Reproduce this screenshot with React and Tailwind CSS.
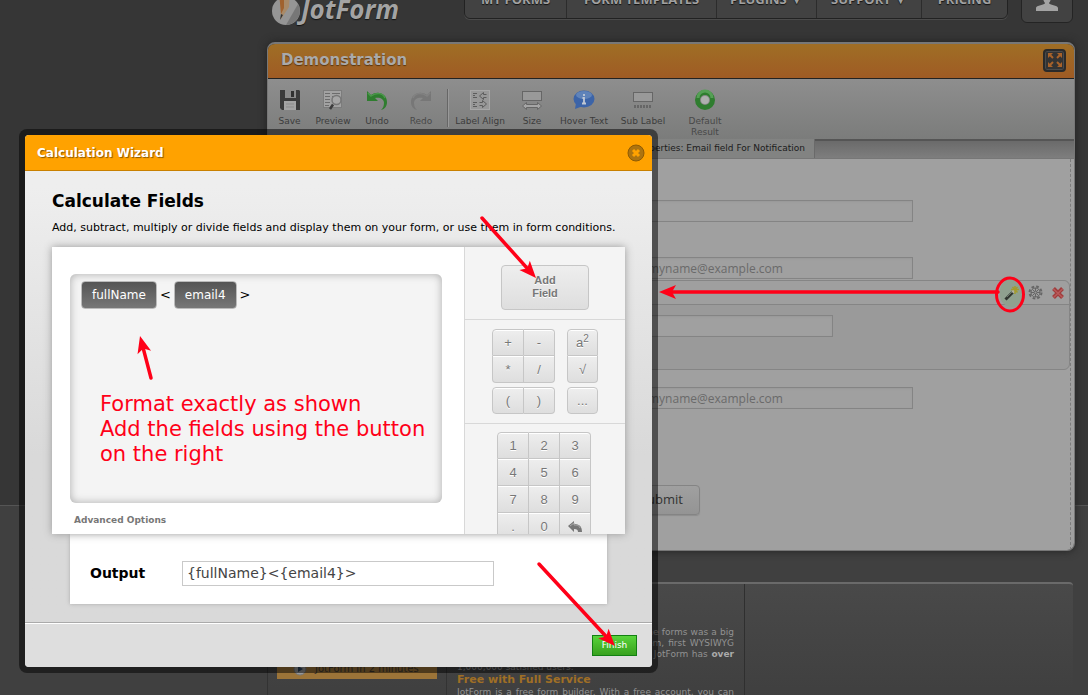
import { clsx } from 'clsx';

const NAV = [
  { label: 'MY FORMS', width: 'w-[102px]' },
  { label: 'FORM TEMPLATES', width: 'w-[150px]' },
  { label: 'PLUGINS ▼', width: 'w-[100px]' },
  { label: 'SUPPORT ▼', width: 'w-[105px]' },
  { label: 'PRICING', width: 'w-[85px]' },
];

const DIGITS = ['1', '2', '3', '4', '5', '6', '7', '8', '9', '.', '0'];

function SaveIcon() {
  return (
    <svg width="22" height="22" viewBox="0 0 22 22">
      <path d="M1 1h19l1 1v19H3l-2-2z" fill="#3b3b3b" />
      <rect x="6" y="1" width="11" height="8" fill="#8b8b8b" />
      <rect x="12" y="2" width="3" height="6" fill="#303030" />
      <rect x="5" y="12" width="12" height="9" fill="#a4a4a4" />
      <path d="M7 15h8M7 18h8" stroke="#8b8b8b" />
    </svg>
  );
}

function PreviewIcon() {
  return (
    <svg width="22" height="22" viewBox="0 0 22 22" fill="none">
      <rect x="1.500" y="1.500" width="18" height="17" fill="#a2a2a2" stroke="#7c7c7c" />
      <path d="M3 4.500h5M10 4.500h8M3 7.500h5M10 7.500h8M3 10.500h5M3 13.500h5M3 16.500h4" stroke="#6c6c6c" />
      <circle cx="14.500" cy="11" r="4.500" fill="#a6a6a6" stroke="#777" strokeWidth="1.500" />
      <path d="M11 15.500l-3 4.500" stroke="#3c3c3c" strokeWidth="2.500" />
    </svg>
  );
}

function TurnIcon({ color, shade, flip }) {
  return (
    <svg width="22" height="22" viewBox="0 0 22 22" className={clsx(flip && '-scale-x-100')}>
      <path d="M1 2v10h11L9 9c5-1 9 1 9 5 0 3-1 5-3 7 4-1 6-4 6-8 0-8-9-12-16-7z" fill={color} />
      <path d="M2 4l3 3c6-4 12-3 14 2" fill="none" stroke={shade} strokeWidth="1.500" />
    </svg>
  );
}

function LabelAlignIcon() {
  return (
    <svg width="22" height="22" viewBox="0 0 22 22" fill="none" stroke="#5c5c5c">
      <rect x="1.500" y="1.500" width="19" height="19" fill="#989898" stroke="#a8a8a8" />
      <path d="M4 4.500h4M4 6.500h2M4 8.500h4M4 13.500h4M4 15.500h2M4 17.500h4" />
      <path d="M17.500 5.500h-3v-2l-4 3.500 4 3.500v-2h3M10.500 13.500h3v-2l4 3.500-4 3.500v-2h-3" />
    </svg>
  );
}

function SizeIcon() {
  return (
    <svg width="22" height="22" viewBox="0 0 22 22" fill="none" stroke="#666">
      <rect x="1.500" y="2.500" width="19" height="9" fill="#999" />
      <path d="M1.500 17l4-3.500v2h11v-2l4 3.500-4 3.500v-2h-11v2z" fill="#a5a5a5" />
    </svg>
  );
}

function HoverIcon() {
  return (
    <svg width="24" height="22" viewBox="0 0 24 22">
      <ellipse cx="12" cy="10" rx="10.500" ry="8.500" fill="#3c64a8" />
      <path d="M4 14l-1 6 8-3z" fill="#3c64a8" />
      <ellipse cx="12" cy="6" rx="8" ry="4" fill="#5f83b9" />
      <path d="M12 5v2M10.500 9H12v5M10 14.500h4" stroke="#c0c8d4" strokeWidth="1.800" fill="none" />
    </svg>
  );
}

function ResultIcon() {
  return (
    <svg width="22" height="22" viewBox="0 0 22 22" fill="none">
      <circle cx="11" cy="11" r="7.500" stroke="#2f7d2f" strokeWidth="5" />
      <path d="M4 9a7 7 0 0 1 14 0" stroke="#55a055" strokeWidth="3" />
      <circle cx="11" cy="11" r="4" fill="#aeb0ae" />
    </svg>
  );
}

function ToolButton({ label, width, dim, children }) {
  return (
    <button className={clsx('flex shrink-0 flex-col items-center text-[9px] leading-[11px]', width, dim ? 'text-[#484848]' : 'text-[#3c3c3c]')}>
      <span className="mb-[5px] flex h-[22px] items-center">{children}</span>
      {label}
    </button>
  );
}

function Header() {
  return (
    <header className="flex h-[42px] items-start">
      <a href="#home" aria-label="JotForm" className="-mt-2 flex w-[197px] items-center pl-1 text-[#a3a3a3]">
        <svg width="30" height="34" viewBox="0 0 30 34">
          <circle cx="15" cy="19" r="14" fill="#959595" />
          <path d="M15 33a14 14 0 0 0 12-21z" fill="#777" />
          <path d="M9 0h10l-1 15-8 12z" fill="#a88a68" />
          <path d="M8 0h5v16l-3 6z" fill="#a0622e" />
          <path d="M10 22l2 1-3 5z" fill="#333" />
        </svg>
        <span className="font-['Open_Sans'] text-[26px] leading-8 font-bold italic [text-shadow:0_1px_1px_#111]">JotForm</span>
      </a>
      <nav className="-mt-5 flex h-[39px] divide-x divide-[#2c2c2c] rounded-b-md border border-[#222] bg-[#424242] shadow-[0_1px_0_#4b4b4b]">
        {NAV.map((item) => (
          <a
            key={item.label}
            href="#nav"
            className={clsx("flex items-center justify-center pt-px font-['Open_Sans'] text-[13px] font-bold whitespace-nowrap text-[#a0a0a0] [text-shadow:0_1px_1px_#111]", item.width)}
          >
            {item.label}
          </a>
        ))}
      </nav>
      <button aria-label="Account" className="mr-0.5 -mt-5 ml-auto flex h-[43px] w-[52px] items-end justify-center rounded-b-md border border-[#242424] bg-[#424242] pb-[11px]">
        <svg width="24" height="20" viewBox="0 0 24 20" fill="#a3a3a3">
          <path d="M8 6a4 5 0 0 1 8 0c0 3-1 5-2 6 0 2 9 2 9 5v3H1v-3c0-3 9-3 9-5-1-1-2-3-2-6z" />
        </svg>
      </button>
    </header>
  );
}

function Toolbar() {
  return (
    <div className="flex h-[60px] items-start bg-gradient-to-b from-[#8e8e8e] to-[#7b7c7b] pt-[10px]">
      <ToolButton label="Save" width="w-[43px]"><SaveIcon /></ToolButton>
      <ToolButton label="Preview" width="w-11"><PreviewIcon /></ToolButton>
      <ToolButton label="Undo" width="w-11"><TurnIcon color="#2f7d2f" shade="#4c984c" /></ToolButton>
      <ToolButton label="Redo" width="w-11" dim><TurnIcon color="#777" shade="#828282" flip /></ToolButton>
      <span className="ml-1 h-[38px] w-0.5 border-l border-[#666] bg-[#999]" />
      <ToolButton label="Label Align" width="w-[62px]"><LabelAlignIcon /></ToolButton>
      <ToolButton label="Size" width="w-[42px]"><SizeIcon /></ToolButton>
      <ToolButton label="Hover Text" width="w-[62px]"><HoverIcon /></ToolButton>
      <ToolButton label="Sub Label" width="w-14">
        <svg width="22" height="22" viewBox="0 0 22 22">
          <rect x="1.500" y="3.500" width="19" height="9" fill="#999" stroke="#666" />
          <path d="M2 17.500h18" stroke="#666" strokeWidth="3" strokeDasharray="2 1" />
        </svg>
      </ToolButton>
      <ToolButton label={<>Default<br />Result</>} width="w-[68px]" dim><ResultIcon /></ToolButton>
    </div>
  );
}

const field = "block h-[22px] w-[270px] border border-[#848484] bg-[#a0a0a0] px-1 font-['Open_Sans'] text-[12px] text-[#666] placeholder:text-[#6a6a6a] shadow-[inset_0_1px_2px_#999]";

function FormArea() {
  return (
    <div className="relative h-[391px] bg-[#a0a0a0] pt-[41px] pr-1">
      <div className="absolute inset-y-0 right-[3px] border-r border-dashed border-[#7c7c7c]" />
      <div className="pl-[375px]">
        <input aria-label="Full Name" className={field} />
        <input aria-label="E-mail" placeholder="myname@example.com" className={clsx(field, 'mt-[35px]')} />
      </div>
      <div className="mt-px h-[90px] rounded-md border border-[#858585] bg-[#9a9a9a]">
        <div className="flex h-6 items-center justify-end rounded-t-md border-b border-[#858585] bg-[#9f9f9f] pr-1">
          <button aria-label="Calculation wizard" className="mr-1 flex h-7 w-6 items-center justify-center rounded-full bg-[#8fa08f]">
            <svg width="16" height="16" viewBox="0 0 16 16">
              <path d="M1.500 14.500L9 7" stroke="#303630" strokeWidth="3" />
              <path d="M3 12l6-6" stroke="#6b756b" />
              <path d="M8.500 7.500l2-2" stroke="#b0b0a0" strokeWidth="3" />
              <path d="M11 1v8M7 4.500h8M8.500 2l5 5.500M13.500 2L10 5.500" stroke="#a39b2c" strokeWidth="1.500" />
            </svg>
          </button>
          <button aria-label="Settings" className="mr-2">
            <svg width="15" height="15" viewBox="0 0 15 15" fill="none" stroke="#666">
              <circle cx="7.500" cy="7.500" r="6" strokeWidth="2" strokeDasharray="2.700 2" />
              <circle cx="7.500" cy="7.500" r="4.500" />
              <path d="M7.500 3v9M3 7.500h9M4.500 4.500l6 6M10.500 4.500l-6 6" />
              <circle cx="7.500" cy="7.500" r="1.500" fill="#999" />
            </svg>
          </button>
          <button aria-label="Delete">
            <svg width="14" height="14" viewBox="0 0 14 14">
              <path d="M2.500 2.500l9 9M11.500 2.500l-9 9" stroke="#a03c3c" strokeWidth="4" />
              <path d="M2.500 3l9 8.500M11.500 3l-9 8.500" stroke="#b85a5a" strokeWidth="1.500" />
            </svg>
          </button>
        </div>
        <div className="pt-[10px] pl-[294px]">
          <input aria-label="Email field For Notification" className={field} />
        </div>
      </div>
      <div className="pt-[17px] pl-[375px]">
        <input aria-label="Confirm e-mail" placeholder="myname@example.com" className={field} />
      </div>
      <div className="pt-[76px] pl-[355px]">
        <button className="h-[30px] w-[77px] rounded-sm border border-[#848484] bg-gradient-to-b from-[#a0a0a0] to-[#949494] pr-4 text-right font-['Open_Sans'] text-[13px] text-[#333] shadow-[0_1px_1px_#8d8d8d]">Submit</button>
      </div>
    </div>
  );
}

function Editor() {
  return (
    <section className="overflow-hidden rounded-lg border border-t-2 border-[#777] shadow-[0_0_8px_#222]">
      <div className="flex h-[35px] items-center justify-between border-b border-[#222] bg-gradient-to-b from-[#9f6e25] to-[#9f5b24] pr-2 pb-0.5 pl-[13px]">
        <h1 className="text-[15px] font-bold text-[#aaa] [text-shadow:0_1px_1px_#5a3510]">Demonstration</h1>
        <button aria-label="Full screen" className="flex h-[23px] w-[23px] items-center justify-center rounded border-2 border-[#2a2a2a] bg-[#333] shadow-[inset_0_0_0_1px_#4a4a4a]">
          <svg width="16" height="16" viewBox="0 0 16 16" fill="#a8622a" stroke="#a8622a" strokeWidth="2">
            <path d="M2 2l4 4M14 2l-4 4M2 14l4-4M14 14l-4-4" />
            <path strokeWidth="0" d="M1 1h5L1 6zM15 1v5l-5-5zM1 15v-5l5 5zM15 15h-5l5-5z" />
          </svg>
        </button>
      </div>
      <Toolbar />
      <div className="flex h-5 border-b border-[#777] bg-gradient-to-b from-[#686868] to-[#7e7e7e]">
        <div className="w-[547px] border-r border-[#6a6a6a] bg-[#828382] pr-[9px] text-right text-[9px] leading-[19px] whitespace-nowrap text-[#1c1c1c]">Properties: Email field For Notification</div>
        <div className="flex-1 border-t-2 border-[#555]" />
      </div>
      <FormArea />
    </section>
  );
}

function SiteFooter() {
  return (
    <footer className="mt-[31px] mr-0.5 flex h-[130px] rounded-t-sm border-t-2 border-[#6a6a6a] bg-gradient-to-b from-[#494949] to-[#3e3e3e] text-[9px] leading-[11px] text-[#929292]">
      <div className="w-[180px] border-x border-[#333] px-[9px] pt-[70px]">
        <a href="#video" className="flex h-[25px] items-center gap-2 bg-[#9c7438] pt-1 pl-4 text-[10px] text-[#403830]">
          <svg width="14" height="14" viewBox="0 0 14 14">
            <circle cx="7" cy="7" r="6" fill="#999" stroke="#777" />
            <path d="M5 4l5 3-5 3z" fill="#2c435c" />
          </svg>
          JotForm in 2 minutes
        </a>
      </div>
      <div className="w-[298px] border-r border-[#2f2f2f] px-[10px] pt-[43px]">
        <div className="whitespace-nowrap [text-align-last:justify]">
          <p>Before JotForm was founded, creating online forms was a big</p>
          <p>problem. We built JotForm, the form system, first WYSIWYG</p>
          <p>form builder on the web. Since its launch, JotForm has <b className="text-[#aaa]">over</b></p>
        </div>
        <p className="mt-0.5">1,000,000 satisfied users.</p>
        <h2 className="text-[11px] leading-[14px] font-bold text-[#a06f25]">Free with Full Service</h2>
        <p className="whitespace-nowrap [text-align-last:justify]">JotForm is a free form builder. With a free account, you can</p>
      </div>
    </footer>
  );
}

function Key({ children, className, label, edges = 'border' }) {
  return (
    <button
      aria-label={label}
      className={clsx("flex h-[27px] items-center justify-center border-[#c6c6c6] bg-gradient-to-b from-[#eee] to-[#dedede] pt-px font-['Liberation_Sans'] text-[13px] text-[#777] shadow-[inset_0_1px_0_#fff] [text-shadow:0_1px_0_#fff]", edges, className)}
    >
      {children}
    </button>
  );
}

function digitEdges(i) {
  return clsx('border-r border-b', i < 3 && 'border-t', i % 3 === 0 && 'border-l');
}

function Keypad() {
  return (
    <div className="flex w-[161px] shrink-0 flex-col border-l border-[#d8d8d8] bg-[#f4f4f4]">
      <div className="flex h-[73px] shrink-0 justify-center border-b border-[#d8d8d8] pt-[18px]">
        <button className="h-[45px] w-[88px] rounded-sm border border-[#c6c6c6] bg-gradient-to-b from-[#eee] to-[#dedede] pb-0.5 font-['Liberation_Sans'] text-[11px] leading-[13px] font-bold text-[#777] [text-shadow:0_1px_0_#fff]">
          Add<br />Field
        </button>
      </div>
      <div className="flex h-[104px] shrink-0 justify-center gap-3 border-b border-[#d8d8d8] pt-[9px]">
        <div>
          <div className="grid w-[63px] grid-cols-[32px_31px]">
            <Key className="rounded-tl">+</Key>
            <Key className="rounded-tr" edges="border-y border-r">-</Key>
            <Key className="rounded-bl" edges="border-x border-b">*</Key>
            <Key className="rounded-br" edges="border-r border-b">/</Key>
          </div>
          <div className="mt-1 grid w-[63px] grid-cols-[32px_31px]">
            <Key className="rounded-l">(</Key>
            <Key className="rounded-r" edges="border-y border-r">)</Key>
          </div>
        </div>
        <div>
          <Key className="w-[31px] rounded-t"><span>a<sup className="text-[10px]">2</sup></span></Key>
          <Key className="w-[31px] rounded-b" edges="border-x border-b">√</Key>
          <Key className="mt-1 w-[31px] rounded">...</Key>
        </div>
      </div>
      <div className="grid grid-cols-[32px_31px_31px] justify-center pt-2 pr-0.5">
        {DIGITS.map((digit, i) => (
          <Key key={digit} edges={digitEdges(i)} className={clsx(i === 0 && 'rounded-tl', i === 2 && 'rounded-tr')}>{digit}</Key>
        ))}
        <Key label="Undo" edges={digitEdges(11)}>
          <svg width="14" height="12" viewBox="0 0 14 12">
            <path d="M0 5l6-5v3c5 0 8 2 8 8h-4c0-2-1-3-4-3v3z" fill="#777" />
            <path d="M2 5l4-3v2c3 0 5 0 6 3" fill="none" stroke="#aaa" />
          </svg>
        </Key>
      </div>
    </div>
  );
}

function FieldTag({ children }) {
  return (
    <span className="rounded-sm border border-[#bbb] bg-gradient-to-b from-[#555] to-[#777] px-[10px] py-1 text-[12px] leading-[18px] text-white">{children}</span>
  );
}

function Wizard() {
  return (
    <div role="dialog" aria-label="Calculation Wizard" className="absolute top-[129px] left-[19px] w-[639px] rounded-lg bg-black/50 p-1.5">
      <div className="overflow-hidden rounded-sm bg-gradient-to-b from-[#eee] from-10% to-[#d9d9d9] to-60%">
        <div className="flex h-9 items-center justify-between border-b border-[#c98000] bg-[#ffa200] pr-[7px] pl-3">
          <h2 className="text-[12px] font-bold text-white [text-shadow:1px_1px_1px_#8a5800]">Calculation Wizard</h2>
          <button aria-label="Close">
            <svg width="18" height="18" viewBox="0 0 18 18">
              <circle cx="9" cy="9" r="8" fill="#ad7410" stroke="#8e5b04" />
              <path d="M6 6l6 6M12 6l-6 6" stroke="#ffa200" strokeWidth="3" />
            </svg>
          </button>
        </div>
        <div className="px-[27px] pt-[19px]">
          <h3 className="text-[17px] leading-[22px] font-bold text-black">Calculate Fields</h3>
          <p className="mt-2 mb-3 text-[11px] leading-[15px] whitespace-nowrap text-black">Add, subtract, multiply or divide fields and display them on your form, or use them in form conditions.</p>
          <div className="relative flex h-[287px] overflow-hidden bg-white shadow-[0_0_8px_#999]">
            <div className="flex flex-1 flex-col px-[18px] pt-[27px]">
              <div className="mr-1 flex h-[229px] w-[372px] items-start rounded-md bg-[#f4f4f4] px-[11px] pt-[7px] text-[13px] leading-[28px] text-black shadow-[inset_0_0_8px_#aaa]">
                <FieldTag>fullName</FieldTag>
                <span className="px-[3px]">&lt;</span>
                <FieldTag>email4</FieldTag>
                <span className="px-[3px]">&gt;</span>
              </div>
              <a href="#advanced" className="mt-[11px] ml-1 text-[9px] leading-3 font-bold text-[#777]">Advanced Options</a>
            </div>
            <Keypad />
          </div>
          <div className="mx-[18px] mb-[18px] flex h-[70px] items-center bg-white pt-2 pl-5 shadow-[0_0_4px_#aaa]">
            <label htmlFor="output" className="w-[92px] text-[14px] font-bold text-black">Output</label>
            <input id="output" defaultValue="{fullName}<{email4}>" className="h-[25px] w-[312px] border border-[#c9c9c9] bg-white px-1 text-[14px] text-[#444]" />
          </div>
        </div>
        <div className="flex h-[45px] items-center justify-end border-t border-[#aaa] bg-[#dedede] pr-[15px] shadow-[inset_0_1px_0_#fff]">
          <button className="h-[21px] w-[45px] border border-[#128012] bg-gradient-to-b from-[#58d43a] to-[#38a11e] pt-0.5 text-[9px] text-white">Finish</button>
        </div>
      </div>
    </div>
  );
}

function Arrow({ from, to }) {
  const angle = (Math.atan2(to[1] - from[1], to[0] - from[0]) * 180) / Math.PI;
  const length = Math.hypot(to[0] - from[0], to[1] - from[1]);
  return (
    <g transform={`translate(${to[0]} ${to[1]}) rotate(${angle})`}>
      <path d={`M${-length} 0H-12`} stroke="#ff0018" strokeWidth="3.500" strokeLinecap="round" />
      <path d="M0 0L-17 -7L-13 0L-17 7Z" fill="#ff0018" />
    </g>
  );
}

function Annotations() {
  return (
    <div className="pointer-events-none absolute inset-0">
      <svg className="absolute inset-0 h-full w-full" fill="none">
        <Arrow from={[482, 218]} to={[536, 278]} />
        <Arrow from={[151, 378]} to={[140, 336]} />
        <Arrow from={[998, 292]} to={[659, 292]} />
        <Arrow from={[539, 564]} to={[615, 646]} />
        <ellipse cx="1010" cy="294.500" rx="13.500" ry="16.500" stroke="#ff0018" strokeWidth="3" />
      </svg>
      <p className="absolute top-[392px] left-[100px] text-[21px] leading-[25px] whitespace-nowrap text-[#ff0018]">
        Format exactly as shown<br />
        Add the fields using the button<br />
        on the right
      </p>
    </div>
  );
}

export default function App() {
  return (
    <div className="relative h-screen overflow-hidden bg-[linear-gradient(#363636_505px,#555_505px,#555_506px,#404040_506px)] font-['DejaVu_Sans',sans-serif]">
      <div className="pr-[13px] pl-[267px]">
        <Header />
        <Editor />
        <SiteFooter />
      </div>
      <Wizard />
      <Annotations />
    </div>
  );
}
